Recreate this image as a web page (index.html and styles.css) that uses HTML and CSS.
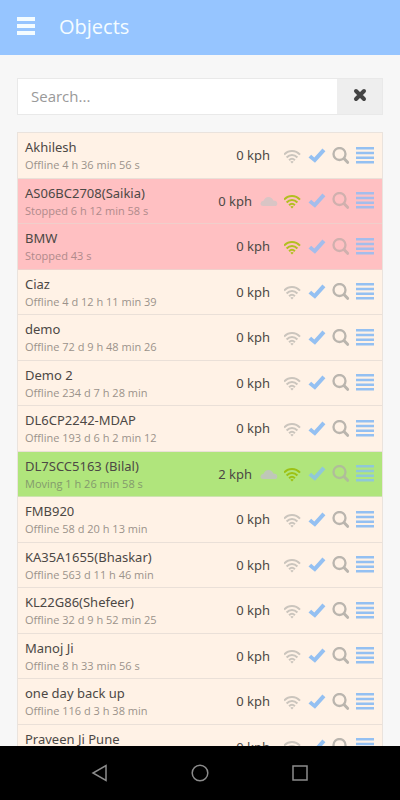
FILE: index.html
```
<!DOCTYPE html>
<html lang="en">
<head>
<meta charset="utf-8">
<meta name="viewport" content="width=device-width, initial-scale=1">
<title>Objects</title>
<link rel="stylesheet" href="styles.css">
</head>
<body>
<svg class="sprite" aria-hidden="true">
  <symbol id="wifi" viewBox="1 0 18 18">
    <g fill="none" stroke="currentColor" stroke-width="2">
      <path d="M1 7.600C5.500 2.700 12.500 2.700 17 7.600"/>
      <path d="M3.600 10.500C6.800 7.100 11.200 7.100 14.400 10.500"/>
      <path d="M6.100 13.200C7.900 11.300 10.100 11.300 11.900 13.200"/>
    </g>
    <path fill="currentColor" d="M7.300 14.700Q9 13.300 10.700 14.700L9 16.600Z"/>
  </symbol>
  <symbol id="check" viewBox="0 0 18 18"><path fill="currentColor" d="M.5 10.500L3.200 7.800 6.300 10.500 14.400 1.500 17.400 4.200 7 15.700Z"/></symbol>
  <symbol id="search" viewBox="0 0 18 18"><g fill="none" stroke="currentColor"><circle cx="7.500" cy="7" r="6" stroke-width="2.300"/><path stroke-width="3" stroke-linecap="round" d="M12.200 11.800L15.600 15.300"/></g></symbol>
  <symbol id="lines" viewBox="0 0 18 18"><path fill="currentColor" d="M0 0h18v2.500H0zM0 4.700h18V7.200H0zM0 9.400h18v2.500H0zM0 14.100h18v2.500H0z"/></symbol>
  <symbol id="cloud" viewBox="0 0 18 18"><path fill="currentColor" d="M3.500 14Q.5 14 .5 11.500 1 9 3.500 8.800 5 5 8.500 5q3.500 0 4.800 3.500Q17.200 8.500 17.300 11.400 17.300 14 14.500 14Z"/></symbol>
</svg>

<header class="topbar">
  <button class="menu" type="button" aria-label="Menu">
    <svg width="18" height="20" viewBox="0 0 18 20"><path fill="currentColor" d="M0 0h18v4H0zM0 7h18v4H0zM0 14h18v4H0z"/></svg>
  </button>
  <h1 class="title">Objects</h1>
</header>

<main class="content">
  <form class="search">
    <input class="search-input" type="text" placeholder="Search..." aria-label="Search">
    <button class="search-clear" type="reset" aria-label="Clear">
      <svg width="14" height="14" viewBox="0 0 14 14"><path stroke="currentColor" stroke-width="4" stroke-linecap="round" d="M3 3l8 8M11 3l-8 8"/></svg>
    </button>
  </form>
  <ul class="objects" id="objects"></ul>
</main>

<nav class="navbar" aria-label="System">
  <button class="nav-button" type="button" aria-label="Back"><svg width="18" height="18" viewBox="0 0 18 18"><path d="M15 1.500v15L2 9Z"/></svg></button>
  <button class="nav-button" type="button" aria-label="Home"><svg width="18" height="18" viewBox="0 0 18 18"><circle cx="9" cy="9" r="7.800"/></svg></button>
  <button class="nav-button" type="button" aria-label="Recent"><svg width="18" height="18" viewBox="0 0 18 18"><path d="M2 2h14v14H2Z"/></svg></button>
</nav>
<script src="app.js"></script>
</body>
</html>
```
FILE: styles.css
```
* {
  box-sizing: border-box;
}

body {
  margin: 0;
  height: 100vh;
  display: flex;
  flex-direction: column;
  background: #f7f7f7;
  color: #4c4845;
  font-family: "Open Sans", "Noto Sans", sans-serif;
}

button {
  padding: 0;
  border: 0;
  background: none;
  color: inherit;
}

svg {
  display: block;
}

.sprite {
  display: none;
}

.topbar {
  flex: none;
  display: flex;
  align-items: center;
  gap: 24px;
  height: 55px;
  padding: 0 17px 2px;
  background: #96c5ff;
  color: #f4fcff;
}

.title {
  margin: 0;
  font-size: 20px;
  font-weight: 400;
  line-height: 28px;
}

.content {
  flex: 1;
  min-height: 0;
  overflow: hidden;
  padding: 23px 17px 0;
}

.search {
  display: flex;
  height: 37px;
  margin-bottom: 17px;
  border: 1px solid #e9e9e9;
}

.search-input {
  flex: 1;
  min-width: 0;
  padding: 0 13px 2px;
  border: 0;
  background: #fff;
  color: #555;
  font: 15px "Open Sans", sans-serif;
}

.search-input::placeholder {
  color: #999;
  opacity: 1;
}

.search-clear {
  display: grid;
  place-items: center;
  width: 45px;
  padding-bottom: 4px;
  background: #eee;
  color: #444;
}

.objects {
  margin: 0;
  padding: 0;
  list-style: none;
  border: 1px solid #eae3dd;
}

.object {
  display: flex;
  align-items: center;
  height: 46px;
  padding: 0 8px 0 7px;
  border-bottom: 1px solid #eae0d8;
  background: #fff2e6;
}

.object:nth-child(even) {
  height: 45px;
}

.object.stopped {
  background: #ffc0c2;
  border-color: #f0cfcb;
}

.object.moving {
  background: #b0e57c;
  border-color: #cde3b0;
}

.info {
  flex: 1;
  min-width: 0;
  white-space: nowrap;
}

.name {
  font-family: "Noto Sans", "Open Sans", sans-serif;
  font-size: 13px;
  line-height: 19px;
}

.status {
  color: #9b928b;
  font-size: 11px;
  line-height: 16px;
}

.stopped .status {
  color: #b08a8b;
}

.moving .status {
  color: #839a6c;
}

.speed {
  margin-right: 14px;
  padding-bottom: 1px;
  font-family: "Noto Sans", "Open Sans", sans-serif;
  font-size: 13px;
  line-height: 18px;
}

.speed.with-cloud {
  margin-right: 8px;
}

.icons {
  display: flex;
  gap: 6px;
}

.wifi {
  color: #cbc5bd;
}

.wifi.online {
  color: #b2bf20;
}

.check,
.lines {
  color: #94c0f2;
}

.search-icon {
  color: #bab5ae;
}

.cloud {
  color: #d9c5c5;
}

.stopped .check,
.stopped .lines {
  color: #a4bdec;
}

.stopped .search-icon {
  color: #d0b0ae;
}

.moving .cloud {
  color: #bfc7b8;
}

.moving .wifi {
  color: #9dc114;
}

.moving .check,
.moving .lines {
  color: #90c8d8;
}

.moving .search-icon {
  color: #b0bd9a;
}

.navbar {
  flex: none;
  display: flex;
  justify-content: center;
  align-items: center;
  gap: 82px;
  height: 54px;
  background: #000;
  color: #8c8c8c;
}

.nav-button svg {
  fill: none;
  stroke: currentColor;
  stroke-width: 1.5;
}
```
FILE: app.js
```
const objects = [
  { name: "Akhilesh", status: "Offline 4 h 36 min 56 s" },
  { name: "AS06BC2708(Saikia)", status: "Stopped 6 h 12 min 58 s", state: "stopped", cloud: true },
  { name: "BMW", status: "Stopped 43 s", state: "stopped" },
  { name: "Ciaz", status: "Offline 4 d 12 h 11 min 39" },
  { name: "demo", status: "Offline 72 d 9 h 48 min 26" },
  { name: "Demo 2", status: "Offline 234 d 7 h 28 min" },
  { name: "DL6CP2242-MDAP", status: "Offline 193 d 6 h 2 min 12" },
  { name: "DL7SCC5163 (Bilal)", status: "Moving 1 h 26 min 58 s", state: "moving", speed: 2, cloud: true },
  { name: "FMB920", status: "Offline 58 d 20 h 13 min" },
  { name: "KA35A1655(Bhaskar)", status: "Offline 563 d 11 h 46 min" },
  { name: "KL22G86(Shefeer)", status: "Offline 32 d 9 h 52 min 25" },
  { name: "Manoj Ji", status: "Offline 8 h 33 min 56 s" },
  { name: "one day back up", status: "Offline 116 d 3 h 38 min" },
  { name: "Praveen Ji Pune", status: "" }
];

const icon = (id, cls) => `<svg class="${cls}" width="18" height="18" aria-hidden="true"><use href="#${id}"/></svg>`;
const button = (id, cls, label) => `<button type="button" aria-label="${label}">${icon(id, cls)}</button>`;

document.getElementById("objects").innerHTML = objects.map(o => `
  <li class="object ${o.state || ""}">
    <div class="info">
      <div class="name">${o.name}</div>
      <div class="status">${o.status || "&nbsp;"}</div>
    </div>
    <div class="speed ${o.cloud ? "with-cloud" : ""}">${o.speed || 0} kph</div>
    <div class="icons">
      ${o.cloud ? icon("cloud", "cloud") : ""}
      ${icon("wifi", "wifi" + (o.state ? " online" : ""))}
      ${button("check", "check", "Select")}
      ${button("search", "search-icon", "Find")}
      ${button("lines", "lines", "Details")}
    </div>
  </li>`).join("");
```
